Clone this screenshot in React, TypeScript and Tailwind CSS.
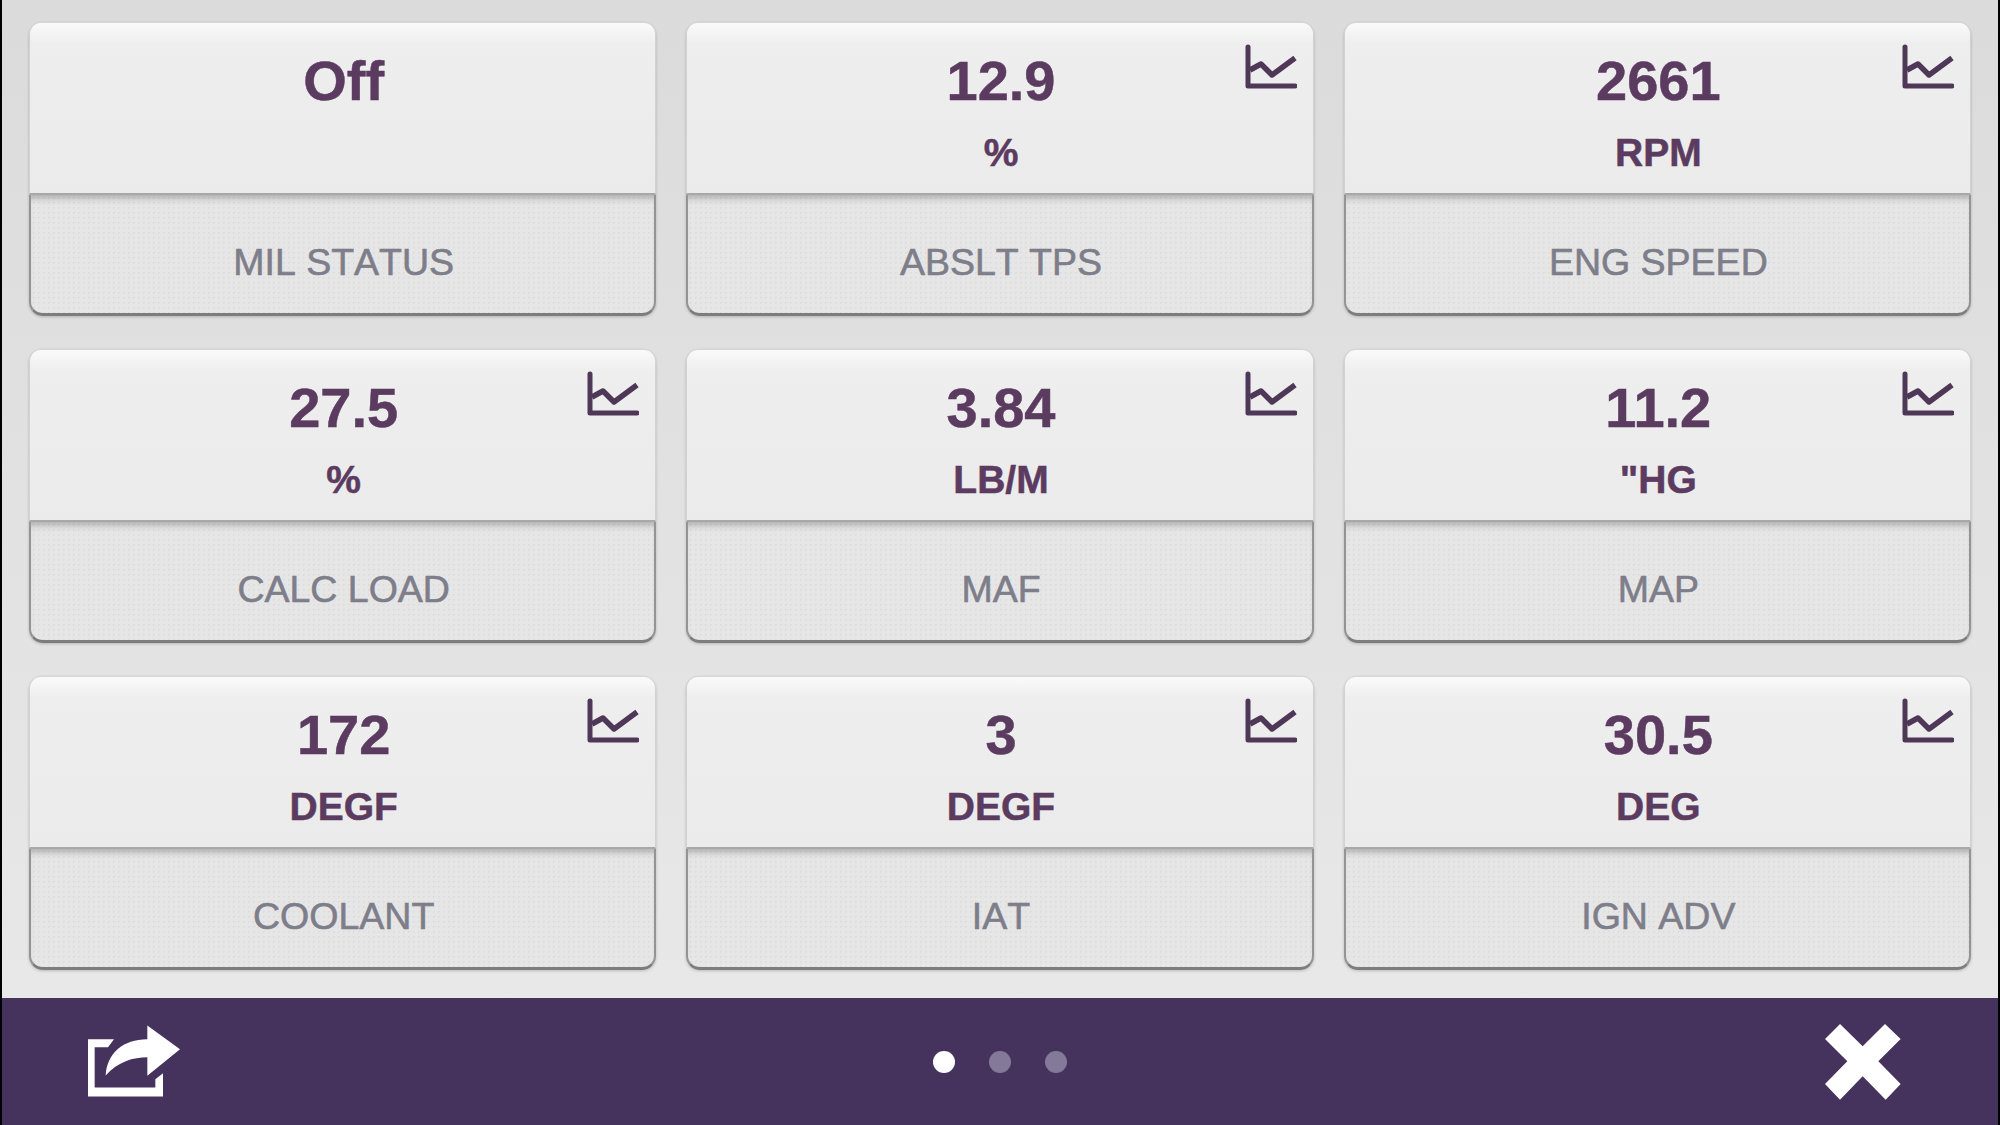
import React from 'react';

interface Reading {
  value: string;
  unit?: string;
  label: string;
  chart?: boolean;
}

const readings: Reading[] = [
  { value: 'Off', label: 'MIL STATUS' },
  { value: '12.9', unit: '%', label: 'ABSLT TPS', chart: true },
  { value: '2661', unit: 'RPM', label: 'ENG SPEED', chart: true },
  { value: '27.5', unit: '%', label: 'CALC LOAD', chart: true },
  { value: '3.84', unit: 'LB/M', label: 'MAF', chart: true },
  { value: '11.2', unit: '"HG', label: 'MAP', chart: true },
  { value: '172', unit: 'DEGF', label: 'COOLANT', chart: true },
  { value: '3', unit: 'DEGF', label: 'IAT', chart: true },
  { value: '30.5', unit: 'DEG', label: 'IGN ADV', chart: true },
];

const ChartIcon = () => (
  <svg
    viewBox="0 0 52 46"
    className="absolute right-[16px] top-[21px] h-[46px] w-[52px]"
    fill="none"
    stroke="#4f3857"
    strokeWidth="5"
  >
    <path d="M3 3V42H50" strokeLinecap="round" strokeLinejoin="round" />
    <path d="M5 26L16 20L27 31L50 14" strokeWidth="5.5" strokeLinejoin="round" />
  </svg>
);

const ShareIcon = () => (
  <svg viewBox="250 190 300 230" className="h-[77px] w-[100px]" fill="#fff">
    <path d="M265 238H343L325 262H285V383H467V358L490 340V410H265Z" />
    <path d="M318 347C322 280 370 238 443 238V197L541 268L443 348V292C400 292 355 305 318 347Z" />
  </svg>
);

const CloseIcon = () => (
  <svg viewBox="225 192 228 231" className="h-[77px] w-[76px]" fill="#fff">
    <path d="M270 195L338 262L405 195L452 240L385 307L452 375L407 422L338 352L270 422L225 375L292 307L225 240Z" />
  </svg>
);

const Card = ({ value, unit, label, chart }: Reading) => (
  <div className="flex h-[294px] flex-col rounded-[14px] shadow-[0_1px_3px_rgba(0,0,0,0.2)]">
    <div className="relative flex h-[173px] flex-col items-center rounded-t-[12px] border-x border-b-2 border-t border-x-[#d2d2d2] border-b-[#a8a8a8] border-t-[#d6d6d6] bg-gradient-to-b from-[#fafafa] from-0% via-[#eeeeee] via-[12%] to-[#ebebeb] pl-[2px] pt-[23px] text-[#5b3b60] [-webkit-text-stroke:0.5px_#5b3b60]">
      <div className="text-[56px] font-bold leading-[70px]">{value}</div>
      {unit && <div className="mt-[15px] text-[39px] font-bold leading-[44px]">{unit}</div>}
      {chart && <ChartIcon />}
    </div>
    <div className="flex flex-1 items-center justify-center rounded-b-[14px] border-x-2 border-b-[3px] border-x-[#949494] border-b-[#7d7d7d] bg-[#e6e6e6] bg-[radial-gradient(#dddddd_1px,transparent_1px)] bg-[length:5px_5px] pl-[2px] pt-[18px] text-[37.5px] leading-none text-[#7e7e8a] shadow-[inset_0_8px_7px_-5px_rgba(0,0,0,0.26)] [font-kerning:none] [-webkit-text-stroke:0.6px_#7e7e8a]">
      {label}
    </div>
  </div>
);

export default function App() {
  return (
    <div className="flex h-[1125px] w-[2000px] flex-col overflow-hidden border-x-2 border-black font-['Liberation_Sans',Arial,sans-serif]">
      <div className="h-[998px] bg-gradient-to-b from-[#dbdbdb] to-[#e8e8e8] px-[27px] pt-[22px]">
        <div className="grid grid-cols-3 gap-x-[30px] gap-y-[33px]">
          {readings.map((r) => (
            <Card key={r.label} {...r} />
          ))}
        </div>
      </div>
      <div className="grid flex-1 grid-cols-3 items-center bg-[#45335e] px-[81px]">
        <div className="justify-self-start">
          <ShareIcon />
        </div>
        <div className="flex items-center justify-center gap-[34px]">
          <div className="h-[22px] w-[22px] rounded-full bg-white" />
          <div className="h-[22px] w-[22px] rounded-full bg-[#85799a]" />
          <div className="h-[22px] w-[22px] rounded-full bg-[#85799a]" />
        </div>
        <div className="mr-[16px] justify-self-end">
          <CloseIcon />
        </div>
      </div>
    </div>
  );
}
